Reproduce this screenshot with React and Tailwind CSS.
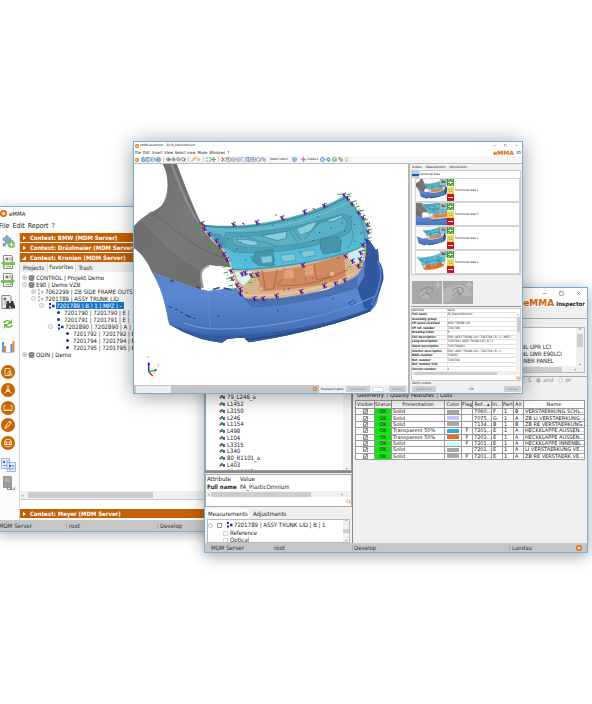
import React from "react";
import {
  Search, Save, FolderOpen, Printer, Eye, ZoomIn, ZoomOut, Move, Scissors,
  Copy, Box, Layers, Grid2x2, Maximize, Ruler, Pencil, MousePointer, Columns2, Square,
  Hexagon, Rotate3d, Crosshair, Lightbulb, PanelLeft, Database, Minus, X,
} from "lucide-react";

const SANS = "font-['DejaVu_Sans_Condensed','Noto_Sans',sans-serif]";

/* ---------- shared pieces ---------- */

function Logo({ className }) {
  return (
    <svg viewBox="0 0 14 14" className={className} aria-hidden="true">
      <circle cx="7" cy="7" r="7" fill="#d9690b" />
      <path d="M3.5 7.5a3.5 3.5 0 1 1 7 0c0 3-7 3-7 0zM4 7h6M7 4.500v6" fill="none" stroke="#fff" strokeWidth="1.300" />
    </svg>
  );
}

function WindowButtons({ className }) {
  return (
    <div className={"flex items-center text-[#333] " + className}>
      <button aria-label="Minimize"><Minus className="block size-full" strokeWidth={2} /></button>
      <button aria-label="Maximize"><Square className="block size-full" strokeWidth={2} /></button>
      <button aria-label="Close"><X className="block size-full" strokeWidth={2} /></button>
    </div>
  );
}

function Menu({ items, className }) {
  return (
    <nav className={"flex items-center " + className}>
      {items.map((m) => <button key={m} className="whitespace-nowrap">{m}</button>)}
    </nav>
  );
}

function Brand({ suffix, className }) {
  return (
    <div className={"flex items-center whitespace-nowrap " + className}>
      <span className="text-[#d9690b] font-bold font-['DejaVu_Sans',sans-serif]">eMMA</span>
      <span>{suffix}</span>
    </div>
  );
}

/* ---------- car model ---------- */

const MARKS = [
  [216, 188], [222, 202], [237, 220], [258, 240], [268, 255], [281, 280], [290, 296], [310, 190], [380, 184], [455, 171],
  [522, 153], [581, 134], [640, 103], [650, 112], [664, 128], [684, 155], [697, 170], [711, 192], [712, 212],
  [708, 238], [697, 252], [690, 275], [688, 295], [683, 315], [665, 300], [645, 285],
  [302, 330], [305, 352], [320, 372], [330, 385], [330, 398], [345, 335], [362, 342], [380, 340],
  [372, 412], [398, 412], [438, 404], [512, 391], [581, 374], [615, 367], [642, 357], [517, 312], [335, 338],
];
const GREEN = [
  [202, 193], [208, 215], [244, 252], [262, 270], [285, 318], [287, 335], [296, 352], [302, 374], [318, 392],
  [627, 101], [655, 101], [672, 122], [680, 138], [694, 150], [705, 178], [718, 206], [716, 232], [702, 268], [692, 305],
  [655, 318], [370, 350], [360, 365],
];

function Marker({ x, y }) {
  return (
    <g strokeWidth="3.500" fill="none">
      <path d={`M${x - 7} ${y - 5}l5 3M${x + 3} ${y + 6}l4 -5`} stroke="#e01818" />
      <path d={`M${x} ${y - 7}v14M${x - 4} ${y}h7`} stroke="#2222b8" />
      <path d={`M${x + 3} ${y - 6}l3 -2`} stroke="#2424e8" />
    </g>
  );
}

function Car({ viewBox, className, side = true, bumper = true, lid = true, marks = true, bright = false, label }) {
  return (
    <svg viewBox={viewBox} preserveAspectRatio="xMinYMin slice" className={className} role="img" aria-label={label}>
      <defs>
        <linearGradient id="gBlue" x1="0" y1="0" x2="0" y2="1">
          <stop offset="0" stopColor="#4f7cc4" /><stop offset=".55" stopColor="#5a87d0" />
          <stop offset=".85" stopColor="#4a75ba" /><stop offset="1" stopColor="#2c539a" />
        </linearGradient>
        <linearGradient id="gGrey" x1="0" y1="0" x2="1" y2="1">
          <stop offset="0" stopColor="#6c6c6c" /><stop offset=".5" stopColor="#7a7a7a" /><stop offset="1" stopColor="#707070" />
        </linearGradient>
        <linearGradient id="gCyan" x1="0" y1="0" x2="0" y2="1">
          <stop offset="0" stopColor="#58adbf" /><stop offset=".6" stopColor="#5cb4c8" /><stop offset="1" stopColor="#5abfda" />
        </linearGradient>
      </defs>
      {bumper && (
        <g>
          <path d="M66 333L128 356 200 381 235 388 318 378 345 408 450 408 590 385 680 335 704 290 706 232 716 238 735 266 741 262 744 300C752 310 759 330 757 355L743 400C741 425 733 438 720 447C640 482 500 520 355 542L342 529C320 528 296 530 288 534L275 543C220 538 170 520 117 488C103 420 96 385 66 333Z" fill="url(#gBlue)" />
          <path d="M706 232L716 238 735 266 741 262 744 300C752 310 759 330 757 355L743 400 722 442 700 440 680 380 700 345Z" fill="#31589e" />
          <path d="M740 300C752 320 753 350 738 392L722 430" fill="none" stroke="#5380c8" strokeWidth="5" />
          <path d="M318 385L345 412C450 420 600 395 682 345L678 378C600 410 460 435 362 438Z" fill="#4970b0" />
          <path d="M117 488C180 506 210 526 280 524 420 522 600 488 722 438L720 449C640 482 500 520 355 542L342 529C320 528 296 530 288 534L275 543C220 538 170 520 117 488Z" fill="#335a9c" />
          <path d="M160 484C200 498 230 504 280 502 420 500 610 462 730 405" fill="none" stroke="#6f98dc" strokeWidth="4" />
          <path d="M190 490C350 505 560 470 700 425" fill="none" stroke="#436db2" strokeWidth="2" strokeDasharray="4 4" />
          <path d="M345 534C480 520 610 492 720 446" fill="none" stroke="#244683" strokeWidth="3" />
          <path d="M232 390L240 500M232 390C280 392 310 386 322 400L362 438" fill="none" stroke="#6792d8" strokeWidth="2" />
          <path d="M116 435l10 4M135 443l8 2M150 451l8 3M165 459l18 8M188 469l7 3" stroke="#1d3f86" strokeWidth="3" />
          <path d="M655 424l14-8 6 8-14 8z" fill="none" stroke="#26498c" strokeWidth="2.500" />
          <path d="M262 461l4 4M440 446l4 4M605 410l4 4" stroke="#26498c" strokeWidth="3" />
        </g>
      )}
      {side && (
        <g>
          <path d="M98 9H140C162 66 186 130 212 184C232 222 256 250 277 266L290 286 303 318 235 312C215 320 210 345 216 378L200 382 128 356 66 333C52 300 38 280 12 260V195C40 158 80 150 98 130C120 100 118 50 98 9Z" fill="url(#gGrey)" />
          <path d="M124 9C150 80 180 150 205 182" fill="none" stroke="#8c8c8c" strokeWidth="7" />
          <path d="M134 9C160 76 184 140 208 184" fill="none" stroke="#626262" strokeWidth="2" />
          <path d="M60 152L75 160C110 125 118 90 112 40M75 160C140 210 220 280 292 292" fill="none" stroke="#626262" strokeWidth="2.500" />
          <path d="M12 195L35 178C90 240 160 300 210 325M35 178L60 152" fill="none" stroke="#8a8a8a" strokeWidth="2" />
          <path d="M35 178C90 240 160 300 208 325L205 380 128 356 66 333C52 300 38 280 12 260V195Z" fill="#666" opacity=".4" />
          <path d="M236 312L303 318 318 378 300 384 270 380 235 388 220 380C214 350 220 322 236 312Z" fill="#fff" />
          <path d="M236 312C212 322 206 330 218 380" fill="none" stroke="#999" strokeWidth="6" />
          <path d="M120 356l12 4M200 377l12 5M248 384l20 -6M280 380l24 4" stroke="#2a4c92" strokeWidth="5" />
        </g>
      )}
      {lid && (
        <g>
          <path d="M300 318C315 350 318 385 350 410C440 417 600 395 680 340C704 310 704 280 706 250L640 278 Z" fill={bright ? "#f07a28" : "#d9b48f"} />
          <path d="M375 335C480 328 580 300 640 278L645 345C580 378 450 385 395 390Z" fill={bright ? "#e2681c" : "#cf8a60"} />
          <path d="M395 325L405 385 430 380 440 325M440 370C500 378 580 362 650 325M460 320L465 350 440 365M490 318v45M520 315l5 45M550 310l8 45 60-14" fill="none" stroke="#aa6e4a" strokeWidth="3" />
          <path d="M460 325l30-4 2 30-34 2zM520 315l28-5 2 30-28 5z" fill="#e0a27c" stroke="#c38a66" strokeWidth="2" />
          <path d="M328 380C335 400 345 402 365 402 470 404 590 382 672 335" fill="none" stroke="#e6c6a4" strokeWidth="5" />
          <circle cx="392" cy="382" r="7" fill="#eab395" stroke="#a85b3b" /><circle cx="604" cy="337" r="8" fill="#eab395" stroke="#a85b3b" />
          <path d="M312 330H370L362 350 340 372 325 360Z" fill="#d8f5f3" />
          <path d="M645 280L700 255 696 300 665 310Z" fill="#cdeef0" />
          <path d="M212 190C350 206 520 172 640 105C662 122 690 160 708 190L712 235C705 255 680 266 640 278C560 302 420 328 305 326C300 300 292 285 280 266C256 250 230 222 212 190Z" fill={bright ? "#5cc8dc" : "url(#gCyan)"} />
          <path d="M280 266C400 285 590 255 712 215L712 235C705 255 680 266 640 278C560 302 420 328 305 326C300 300 292 285 280 266Z" fill="#4fbfe0" opacity=".55" />
          <path d="M212 192C350 212 520 180 642 112" fill="none" stroke="#3d899b" strokeWidth="4" />
          <path d="M225 201C350 222 530 190 650 124" fill="none" stroke="#7fcad8" strokeWidth="2" />
          <path d="M290 214C400 220 540 190 625 160C660 152 672 185 655 215C560 262 420 280 312 272C285 262 270 225 290 214Z" fill="#4da2b5" stroke="#3f8fa4" strokeWidth="2.500" />
          <path d="M308 226C400 230 540 195 630 168C652 170 650 190 640 208C560 245 430 265 330 256C310 248 300 238 308 226Z" fill="#5bb1c4" stroke="#428fa3" strokeWidth="2" />
          <path d="M316 235C350 230 380 240 392 248C370 258 330 250 316 235ZM390 224L470 210 466 232 440 238ZM497 203C515 195 550 180 560 182L540 210 510 222ZM585 178L635 160 636 168 605 182Z" fill="#8accda" stroke="#3f8b9f" strokeWidth="2.500" />
          <path d="M470 200L500 242M482 198L512 238M345 226L440 255M570 180L520 235" stroke="#4592a6" strokeWidth="3" />
          <path d="M376 272L425 265 432 300 425 314 385 312 364 296Z" fill="#4894a8" stroke="#3c8195" strokeWidth="2.500" />
          <path d="M568 235L618 225 632 238 628 270 578 278 570 262Z" fill="#4894a8" stroke="#3c8195" strokeWidth="2.500" />
          <path d="M450 282l42-5 4 20-40 5zM512 271l38-7 4 18-38 7zM390 286l35-3v20l-30 3z" fill="#86c9d6" stroke="#44a0b8" strokeWidth="2.500" />
          <path d="M305 324C420 326 560 300 640 276 680 264 705 252 711 238" fill="none" stroke="#3593af" strokeWidth="3" />
          <path d="M645 108C680 140 700 185 702 238M660 200C672 215 668 240 650 262" fill="none" stroke="#4598ac" strokeWidth="3" />
          <path d="M240 215L275 220 290 262 270 256Z" fill="#4580ac" opacity=".6" />
          <path d="M212 190C230 222 256 250 280 266C292 285 300 300 306 326L318 372 345 408" fill="none" stroke="#ddc69e" strokeWidth="3" />
          <path d="M290 232h3M332 225h3M330 242h3M380 246h3M425 192h3M495 178h3M560 165h3M600 200h3M632 185h3M640 210h3M660 165h3M670 190h3M690 215h3M505 272h3M360 287h3M345 297h3M318 262h3M565 214h3M545 238h3M672 240h3M430 310h3M620 290h3" stroke="#173f9a" strokeWidth="3" />
        </g>
      )}
      {marks && (
        <g>
          {MARKS.map(([x, y]) => <Marker key={x + "-" + y} x={x} y={y} />)}
          {GREEN.map(([x, y]) => <path key={x + "-" + y} d={`M${x - 7} ${y}l13 -3M${x + 4} ${y + 5}l2 2`} stroke="#22c022" strokeWidth="3" />)}
          <path d="M336 185l6 5M546 142l8 4M435 162h4" stroke="#e02020" strokeWidth="4" />
          <path d="M472 382h4M460 385h3M347 394h3M545 350h3" stroke="#b02890" strokeWidth="4" />
        </g>
      )}
      {marks && (
        <g strokeWidth="4" fill="none">
          <path d="M56 630V604" stroke="#1414e8" /><path d="M52 608l4-8 4 8z" fill="#1414e8" />
          <path d="M56 630l20-4" stroke="#18c818" /><path d="M74 622l8 3-7 4z" fill="#105010" />
          <path d="M56 630l12 13" stroke="#e81414" />
        </g>
      )}
    </svg>
  );
}

/* ---------- left window ---------- */

function SideIcon({ kind }) {
  const round = (d) => (
    <svg viewBox="0 0 14 14" className="size-3.5"><circle cx="7" cy="7" r="7" fill="#c86300" /><path d={d} fill="none" stroke="#fbe3cf" strokeWidth=".9" /></svg>
  );
  switch (kind) {
    case "plugin":
      return <svg viewBox="0 0 14 14" className="size-3.5"><path d="M2 4h2.500a1.700 1.700 0 1 1 3 0H10v2.500a1.700 1.700 0 1 1 0 3V12H7a1.500 1.500 0 1 0-2.500 0H2V9.500a1.600 1.600 0 1 0 0-3z" fill="#8aa3c0" stroke="#6b86a8" strokeWidth=".5" /><circle cx="10.500" cy="10.500" r="3.500" fill="#7fc25a" /><path d="M10.500 8.500v4M8.500 10.500h4" stroke="#fff" strokeWidth="1.200" /></svg>;
    case "import":
    case "export":
      return <svg viewBox="0 0 14 14" className="size-3.5"><path d="M2.500.5h8l1 1v12h-9z" fill="#f4f4f4" stroke="#8a8a8a" /><path d="M5 3h2v2H5zM8 3h3M8 5h3M5 11.500h5" stroke="#777" fill="#777" strokeWidth=".7" /><path d={kind === "import" ? "M0 8l4-3v2h10v3H4v2z" : "M14 8l-4-3v2H0v3h10v2z"} fill="#7cc254" /></svg>;
    case "find":
      return <svg viewBox="0 0 14 14" className="size-3.5"><path d="M1 .5h8l1 1v12H1z" fill="#eee" stroke="#888" /><path d="M3 3h2v2H3zM3 7h3M3 9h2" stroke="#777" fill="#777" strokeWidth=".7" /><path d="M6 6h2v2h2V6h2l2 5v2.500h-4V11H8.500v2.500H5V11z" fill="#3c3c3c" /></svg>;
    case "sync":
      return <svg viewBox="0 0 14 14" className="size-3.5"><path d="M2 6c1-3 5-4 7-2l2-2v5H6l2-2C6 4 4 5 4 6zM12 8c-1 3-5 4-7 2l-2 2V7h5L6 9c2 1 4 0 4-1z" fill="#79bd50" /></svg>;
    case "chart":
      return <svg viewBox="0 0 14 14" className="size-3.5"><path d="M2 3v10M10.500 5v8" stroke="#5489c4" strokeWidth="1.800" /><path d="M4 7v6M12.500 2v11" stroke="#e67b37" strokeWidth="1.800" /><path d="M1 13.500h12" stroke="#999" strokeWidth=".6" /></svg>;
    case "zoomdoc": return round("M4 3.500h5v7H4zM8.500 6.500a1.800 1.800 0 1 0 .1 0M10 9.500l1.500 1.500");
    case "axes": return round("M7 2.500v5M7 7.500l-4 3M7 7.500l4 3M5.500 6.500h3v2h-3zM6 3.500l1-1 1 1");
    case "gauge": return round("M4.500 4.500H3v5h8v-5H9.500M5 9.500V8M7 9.500V8M9 9.500V8");
    case "pen": return round("M4 10.500l.5-2.500L8.500 3l2 1.500-4 5zM8 4l2 1.500M4 10.500l3-4");
    case "stack": return round("M4 4.500c0-1.500 6-1.500 6 0v5c0 1.500-6 1.500-6 0zM3 6h8M3 8.500h8M5.500 6v2.500M8.500 6v2.500");
    case "docs":
      return <svg viewBox="0 0 15 14" className="h-3.5 w-[15px]"><path d="M.5.5h8v10h-8zM6 4.500h8.500v9H6z" fill="#e4edfa" stroke="#9cb6e0" /><path d="M2 3h2v2H2zM8 7h2v2H8z" fill="#3c62a8" /><path d="M5.500 3h2M2 7.500h4M11 7.500h2M11 9h2M8 11h5" stroke="#7b98cc" /></svg>;
    default:
      return <svg viewBox="0 0 14 14" className="size-3.5"><path d="M2 0h8l1 1v11H2z" fill="#9a9a9a" /><path d="M4 3h4M4 5h5" stroke="#c8c8c8" /><path d="M7 11.500a2 1.500 0 1 0 3 0 2 1.500 0 1 0 3 0" fill="none" stroke="#888" strokeWidth="1.200" /></svg>;
  }
}

function Node({ kind }) {
  if (kind === "db") return <Database className="mr-px h-1.5 w-[7px] shrink-0 text-[#777]" strokeWidth={4} fill="#999" />;
  if (kind === "gray" || kind === "blue")
    return <svg viewBox="0 0 7 6" className={"mr-px h-1.5 w-[7px] shrink-0 " + (kind === "blue" ? "text-[#15309c]" : "text-[#bbb]")}><path d="M1 0h2v2H1zM1 3.500h2v2H1zM4 1.800h2.500v2.500H4z" fill="currentColor" /></svg>;
  return <span className="mr-1 size-[3px] shrink-0 rounded-full bg-[#15309c]" />;
}

function Plus({ open }) {
  return <span className="mr-px flex size-[5px] shrink-0 items-center justify-center rounded-xs border border-[#ccc] bg-[#f4f4f4] text-[4px] leading-none text-[#888]">{open ? "-" : "+"}</span>;
}

const TREE = [
  ["pl-[2px]", "+", "db", "CONTROL | Projekt Demo"],
  ["pl-[2px]", "-", "db", "E90 | Demo VZB"],
  ["pl-[11px]", "+", "gray", "7062299 | ZB SIDE FRAME OUTS"],
  ["pl-[11px]", "-", "gray", "7201789 | ASSY TRUNK LID"],
  ["pl-[19px]", "-", "blue", "7201789 | B | 1 | MPZ | -"],
  ["pl-[37px]", "", "dot", "7201790 | 7201790 | E |"],
  ["pl-[37px]", "", "dot", "7201791 | 7201791 | E |"],
  ["pl-[28px]", "-", "blue", "7202890 | 7202890 | A |"],
  ["pl-[46px]", "", "dot", "7201792 | 7201792 | E"],
  ["pl-[46px]", "", "dot", "7201794 | 7201794 | E"],
  ["pl-[46px]", "", "dot", "7201795 | 7201795 | E"],
  ["pl-[2px]", "+", "db", "ODIN | Demo"],
];

function ContextBar({ name, open }) {
  return (
    <button className="flex h-[9px] shrink-0 items-center gap-1 bg-[#c66006] pl-[2px] text-left text-[6px] leading-none font-bold text-white">
      <svg viewBox="0 0 4 4" className="size-1"><path d={open ? "M4 0v4H0z" : "M1 0l3 2-3 2z"} fill="#fff" /></svg>
      <span>{"Context: " + name + " (MDM Server)"}</span>
    </button>
  );
}

function MainWindow() {
  const side = [
    ["plugin", "mt-[1px]"], ["import", "mt-[7px]"], ["export", "mt-[4px]"], ["find", "mt-2"], ["sync", "mt-2"], ["chart", "mt-2"],
    ["zoomdoc", "mt-3"], ["axes", "mt-[4px]"], ["gauge", "mt-[4px]"], ["pen", "mt-[3px]"], ["stack", "mt-[4px]"],
    ["docs", "mt-2"], ["list", "mt-[4px]"],
  ];
  return (
    <section className="absolute top-[206px] left-[-2px] flex h-[326px] w-[281px] flex-col border border-[#7fb4d8] bg-white shadow-[0_3px_12px_rgba(0,0,0,0.3)]">
      <header className="flex h-[13px] items-center gap-[2px] pl-px text-[6px] leading-none"><Logo className="size-[7px]" />eMMA</header>
      <Menu items={["File", "Edit", "Report", "?"]} className="h-[13px] gap-[3px] text-[7px] leading-none" />
      <div className="flex min-h-0 flex-1">
        <aside className="flex w-5 flex-col items-start bg-[#fcfcfc]">
          {side.map(([k, m]) => <button key={k} aria-label={k} className={"ml-[2px] " + m}><SideIcon kind={k} /></button>)}
        </aside>
        <div className="flex min-w-0 flex-1 flex-col border-l border-[#d5d5d5]">
          <div className="flex flex-col gap-px">
            <ContextBar name="BMW" /><ContextBar name="Dräxlmaier" /><ContextBar name="Kronion" open />
          </div>
          <div className="flex h-[10px] items-stretch bg-[#f0f0f0] text-[6px] leading-none">
            <button className="px-[3px] pt-[2px]">Projects</button>
            <button className="border-x border-[#ddd] bg-white px-px">Favorites</button>
            <button className="px-[3px] pt-[2px]">Trash</button>
          </div>
          <ul className="flex-1 pt-[2px] text-[6px] leading-none">
            {TREE.map(([pad, exp, kind, text], i) => (
              <li key={i} className={"flex h-[7px] items-center whitespace-pre " + pad}>
                {exp && <Plus open={exp === "-"} />}
                {kind === "blue" && <span className="w-[3px]" />}
                <Node kind={kind} />
                <span className={i === 4 ? "flex h-[7px] w-[68px] items-center bg-[#1878d0] text-white" : ""}>{text}</span>
              </li>
            ))}
          </ul>
          <div className="flex h-[9px] items-center gap-1 border-b border-[#ccc] bg-[#f0f0f0] pl-[2px] text-[5px] leading-none"><span>‹</span><span className="h-1.5 w-[125px] bg-[#cdcdcd]" /></div>
          <div className="mb-[2px] flex flex-col pt-[9px]"><ContextBar name="Meyer" /></div>
        </div>
      </div>
      <footer className="flex h-[11px] items-center bg-[#c6c6c6] text-[6px] leading-none text-[#333]">
        <span className="w-[67px]">MDM Server</span><span className="w-[91px] border-l border-[#aaa] pl-[2px]">root</span><span className="border-l border-[#aaa] pl-[2px]">Develop</span>
      </footer>
    </section>
  );
}

/* ---------- inspector window ---------- */

const LABELS = ["79_L246_a", "L1452", "L3150", "L246", "L1154", "L498", "L104", "L3315", "L340", "80_R1101_a", "L403", "79_R0713_a"];

const PARTS = [
  ["Solid", "bg-[#a8a8a8]", "", "7060...", "F", "1", "B", "VERSTAERKUNG SCHL..."],
  ["Solid", "bg-[#c8c4ff]", "", "7075...", "G", "1", "A", "ZB LI VERSTAERKUNG ..."],
  ["Solid", "bg-[#a8a8a8]", "", "7134...", "B", "1", "B", "ZB RE VERSTAERKUNG..."],
  ["Transparent 50%", "bg-[#28b0e0]", "F", "7201...", "E", "1", "A", "HECKKLAPPE AUSSEN..."],
  ["Transparent 50%", "bg-[#f06a18]", "F", "7201...", "E", "1", "A", "HECKKLAPPE AUSSEN..."],
  ["Solid", "bg-[#c8fcff]", "F", "7201...", "E", "1", "A", "HECKKLAPPE INNENBL..."],
  ["Solid", "bg-[#a8a8a8]", "", "7201...", "E", "1", "A", "LI VERSTAERKUNG VE..."],
  ["Solid", "bg-[#a8a8a8]", "F", "7201...", "E", "1", "A", "ZB RE VERSTAERK.VE..."],
];

function Check({ label, checked, muted }) {
  return (
    <span className="relative mx-auto flex size-[5px] items-center justify-center">
      <input type="checkbox" defaultChecked={checked} aria-label={label} className={"size-[5px] appearance-none border bg-white " + (muted ? "border-[#d4d4d4]" : "border-[#999]")} />
      {checked && <svg viewBox="0 0 5 5" className="pointer-events-none absolute inset-0"><path d="M1 2.500l1 1.200 2-2.700" stroke="#222" strokeWidth=".7" fill="none" /></svg>}
    </span>
  );
}

function Inspector() {
  const td = "border border-[#9a9a9a] p-0 pl-px";
  return (
    <section className="absolute top-[287px] left-[204px] flex h-[266px] w-[384px] flex-col border border-[#6fb0dc] bg-[#f0f0f0] shadow-[0_3px_14px_rgba(0,0,0,0.35)]">
      <header className="flex h-[11px] items-center justify-end bg-white">
        <WindowButtons className="mr-[6px] gap-3 [&>button]:size-[5px]" />
      </header>
      <Brand suffix="Inspector" className="h-[8px] items-baseline justify-end gap-[2px] bg-white pr-[2px] font-bold [&>span:first-child]:text-[9px] [&>span:first-child]:leading-[9px] [&>span:last-child]:text-[6px]" />
      <div className="h-[12px] border-b border-[#aaa]" />
      <div className="flex min-h-0 flex-1">
        <div className="flex w-[148px] shrink-0 flex-col border-r border-[#888]">
          <div className="flex h-[154px] overflow-hidden border border-[#999] bg-white">
            <ul className="mt-[74px] grid h-[81px] flex-1 auto-rows-fr pl-[13px] text-[6px] leading-none">
              {LABELS.map((l) => (
                <li key={l} className="flex items-center gap-[2px]">
                  <svg viewBox="0 0 6 4" className="h-1 w-1.5"><path d="M0 2.500L2 .5V4z" fill="#e04030" /><path d="M2 0h2v3H2z" fill="#38a048" /><path d="M4 1h2v3H4z" fill="#4060e0" /></svg>{l}
                </li>
              ))}
            </ul>
            <span className="flex w-2 items-end justify-center bg-[#f4f4f4] text-[5px] leading-none">⌄</span>
          </div>
          <div className="h-[3px] border-t-2 border-[#888]" />
          <div className="h-[33px] border border-[#aaa] bg-white text-[6px] leading-none">
            <table className="w-full table-fixed text-left">
              <thead><tr className="h-2"><th className="w-[34px] p-0 pl-px font-normal">Attribute</th><th className="p-0 font-normal">Value</th></tr></thead>
              <tbody><tr className="h-2"><td className="p-0 pl-px font-bold">Full name</td><td className="p-0">FA_PlasticOmnium</td></tr></tbody>
            </table>
            <div className="flex h-1.5 items-center gap-px bg-[#f0f0f0] px-[2px] text-[5px]"><span>‹</span><span className="h-[5px] w-[100px] bg-[#cdcdcd]" /><span className="ml-auto pr-1.5">›</span></div>
            <label className="flex h-[9px] items-center justify-end"><input aria-label="Filter attributes" className="h-2 min-w-0 flex-1" /><Search className="size-[5px] text-[#e08030]" strokeWidth={3} /></label>
          </div>
          <div className="mt-[2px] flex h-[10px] items-center gap-1 pl-[2px] text-[6px] leading-none">
            <button className="h-full bg-white px-px">Measurements</button><button>Adjustments</button>
          </div>
          <div className="mx-[2px] flex h-[24px] overflow-hidden border border-[#bbb] bg-white text-[6px] leading-none">
            <ul className="flex-1 pt-px">
              <li className="flex h-2 items-center"><Plus open /><span className="mx-[3px]"><Check label="Trunk lid" /></span><span className="ml-px"><Node kind="blue" /></span>7201789 | ASSY TRUNK LID | B | 1</li>
              <li className="flex h-2 items-center pl-[15px]"><label className="flex items-center gap-[2px]"><Check muted label="Reference" />Reference</label></li>
              <li className="flex h-1.5 items-center pl-[15px]"><label className="flex items-center gap-[2px]"><Check muted label="Optical" />Optical</label></li>
            </ul>
            <span className="flex w-1.5 flex-col items-center justify-between bg-[#f0f0f0] text-[4px]"><span>⌃</span><span className="h-1 w-1.5 bg-[#cdcdcd]" /><span>⌄</span></span>
          </div>
        </div>
        <div className="flex min-w-0 flex-1 flex-col">
          <div className="mx-[2px] mt-2 flex h-[46px] border border-[#bbb] bg-white">
            <div className="flex min-w-0 flex-1 flex-col">
              <ul className="flex-1 overflow-hidden pt-[15px] pl-[162px] text-[6px] leading-[7px] whitespace-nowrap">
                <li>PNL UPR LCI</li><li>PNL LWR E90LCI</li><li>INNER PANEL</li>
              </ul>
              <div className="flex h-[6px] items-center justify-end bg-[#f0f0f0] text-[5px] leading-none"><span className="mr-3 h-[5px] w-[150px] bg-[#cdcdcd]" /><span>›</span></div>
            </div>
            <div className="flex w-2 flex-col items-center bg-[#f0f0f0] text-[5px] leading-none"><span>⌃</span><span className="mt-px h-[13px] w-1.5 bg-[#cdcdcd]" /><span className="mt-auto mb-1.5">⌄</span></div>
          </div>
          <fieldset className="mt-[3px] flex h-[18px] items-center justify-end gap-[5px] border-t border-[#aaa] pr-4 text-[6px] leading-none text-[#888]">
            <label className="flex items-center gap-[3px]"><Check muted label="S" />S</label>
            <label className="flex items-center gap-[2px]"><input type="radio" name="op" defaultChecked className="size-[5px] appearance-none rounded-full border border-[#bbb] bg-white checked:bg-[#bbb]" />and</label>
            <label className="flex items-center gap-[2px]"><input type="radio" name="op" className="size-[5px] appearance-none rounded-full border border-[#ccc] bg-white" />or</label>
          </fieldset>
          <div className="flex h-[6px] items-end gap-[3px] pb-[2px] pl-1 text-[6px] leading-none"><button>Geometry</button><button className="border-l border-[#bbb] pl-[2px]">Quality Features</button><button className="border-l border-[#bbb] pl-[2px]">Cuts</button></div>
          <div className="mx-[2px]">
            <table className="h-[60px] w-full table-fixed border-collapse bg-white text-left font-['DejaVu_Sans',sans-serif] text-[5px] leading-[5px] whitespace-nowrap">
              <colgroup><col className="w-[19px]" /><col className="w-[17px]" /><col className="w-[53px]" /><col className="w-[17px]" /><col className="w-[11px]" /><col className="w-[19px]" /><col className="w-[11px]" /><col className="w-[11px]" /><col className="w-[10px]" /><col /></colgroup>
              <thead><tr className="h-2 text-center">{["Visible", "Status", "Presentation", "Color", "Flag", "Ref...▴", "In...", "Part", "Alt", "Name"].map((h) => <th key={h} className="border border-[#9a9a9a] p-0 font-normal">{h}</th>)}</tr></thead>
              <tbody>
                {PARTS.map(([pres, color, flag, ref, ix, part, alt, name], i) => (
                  <tr key={i}>
                    <td className="border border-[#9a9a9a] p-0"><Check checked label={"Show " + name} /></td>
                    <td className="border border-[#9a9a9a] bg-[#00f000] p-0 text-center">OK</td>
                    <td className={td}>{pres}</td>
                    <td className="border border-[#9a9a9a] p-0"><span className={"mx-auto block h-1 w-3 " + color} /></td>
                    <td className="border border-[#9a9a9a] p-0 text-center">{flag}</td>
                    <td className={td}>{ref}</td><td className={td}>{ix}</td><td className={td}>{part}</td><td className={td}>{alt}</td>
                    <td className={td}>{name}</td>
                  </tr>
                ))}
              </tbody>
            </table>
          </div>
        </div>
      </div>
      <footer className="flex h-[9px] items-center bg-[#c6c6c6] text-[6px] leading-none text-[#333]">
        <span className="w-[67px] pl-[6px]">MDM Server</span><span className="w-[80px] pl-[2px]">root</span><span className="flex-1 border-l border-[#aaa] pl-px">Develop</span><span className="w-[67px] border-l border-[#aaa] pl-[2px]">Landau</span><Logo className="mr-[5px] size-[6px]" />
      </footer>
    </section>
  );
}

/* ---------- 3D assembler window ---------- */

const TOOLS = [
  [Save, "text-[#4a7fc0]"], [PanelLeft, "text-[#4a7fc0]"], [FolderOpen, "text-[#4a90c0]"], [Printer, "text-[#667]"], null,
  [Eye, "text-[#445]"], [ZoomIn, "text-[#3a9a3a]"], [ZoomOut, "text-[#3a9a3a]"], [Search, "text-[#444]"], null,
  [Pencil, "text-[#e08a30]"], [MousePointer, "text-[#e0a070]"], null, [Maximize, "text-[#3aa03a]"], [Move, "text-[#3aa03a]"], null,
  [Scissors, "text-[#a06a40]"], [Copy, "text-[#8a7050]"], [Layers, "text-[#7a90b0]"], [Box, "text-[#7a90b0]"], [Square, "text-[#a0a8b8]"],
  [Columns2, "text-[#4a70b0]"], [Grid2x2, "text-[#7a90b0]"], [Hexagon, "text-[#4a70b0]"], [Ruler, "text-[#4a70b0]"],
];
const TOOLS2 = [[Crosshair, "text-[#2a8ad0]"], [Rotate3d, "text-[#4a60d0]"], [Layers, "text-[#30a040]"], [Ruler, "text-[#555]"], [Lightbulb, "text-[#e0a020]"]];

const SCENES = [
  { name: "Functional Area 1", tag: "R2", box: "12 80 740 525", props: {} },
  { name: "Functional Area 3", tag: "R2", box: "130 180 440 312", props: {} },
  { name: "Functional Area 2", tag: "F1", box: "60 120 720 511", props: { side: false } },
  { name: "Functional Area 4", tag: "R0", box: "200 80 540 383", props: { side: false, bumper: false, bright: true } },
];

const ATTRS = [
  ["Full name", "FA_PlasticOmnium"], ["Assembly group", "-"], ["CP name localized", "ASSY TRUNK LID"], ["CP ref. number", "7201789"],
  ["Drawing index", "B"], ["Full description", "E90 / ASSY TRUNK LID / 7201789 / B / 1 / MPZ / -"], ["Long description", "7201789 | ASSY TRUNK LID | B | 1"],
  ["Short description", "7201789|B|1"], ["Shorter description", "E90 / ASSY TRUNK LID / 7201789 / B / 1"], ["NAEL number", "5360SV"],
  ["Ref. number", "7201789"], ["Ref. number hint", ""], ["Version number", "1"],
];

function Scene({ name, tag, box, props }) {
  return (
    <li className="ml-[3px] flex h-6 items-stretch border border-[#d5d5d5] bg-white">
      <div className="relative w-[31px]">
        <Car viewBox={box} className="h-[22px] w-[31px]" marks={false} label={name} {...props} />
        <span className="absolute top-0 right-0 flex h-[6px] w-[7px] items-center justify-center bg-[#a8b8c4] text-[3px] leading-none font-bold">{tag}</span>
      </div>
      <div className="flex w-[7px] flex-col justify-between">
        <button aria-label={"Add to " + name} className="h-[7px] bg-[#3c9c28]"><svg viewBox="0 0 7 7" className="size-full"><path d="M1 1h1.500M4.500 1H6M1 3.500h1M5 3.500h1M1 6h1.500M4.500 6H6M3.500 2v3M2 3.500h3" stroke="#e8f8e0" /></svg></button>
        <button aria-label={"Edit " + name} className="h-[7px] bg-[#e8dc50]"><svg viewBox="0 0 7 7" className="size-full"><path d="M1 2.500h5M1 4.500h5" stroke="#c8bc60" /></svg></button>
        <button aria-label={"Remove from " + name} className="h-[7px] bg-[#cc1020]"><svg viewBox="0 0 7 7" className="size-full"><path d="M1 3.500h5" stroke="#fff" /></svg></button>
      </div>
      <span className="self-center pl-px">{name}</span>
    </li>
  );
}

function GhostThumb({ rot }) {
  return (
    <button aria-label="Scene action" className="h-[23px] w-[30px] bg-[#a8a8a8]">
      <svg viewBox="0 0 30 23" className="size-full"><path d={rot ? "M0 9L8 5 17 3 26 8 30 14 22 16 14 14 6 20 0 23z" : "M7 13l6-5 7 3-3 6-6 1z"} fill="#b6b6b6" /><path d="M9 10c3-4 9-5 11-2s-2 6-6 5M10 15l5-5 4 6M14 7l2 6" fill="none" stroke="#8c8c8c" /><path d="M25 1h2v2h2v2h-2v2h-2V5h-2V3h2z" fill="#bebebe" /></svg>
    </button>
  );
}

function Pager({ children, className }) {
  return <button className={"h-[6px] bg-[#cfcfcf] text-[3px] leading-none text-[#888] " + className}>{children}</button>;
}

function Assembler() {
  return (
    <section className="absolute top-[141px] left-[133px] flex h-[253px] w-[390px] flex-col border border-[#6fb0d0] bg-white text-[3px] leading-none shadow-[0_2px_20px_rgba(0,0,0,0.4)]">
      <header className="flex h-[7px] items-center gap-px pl-px"><Logo className="size-1" /><h1>eMMA Assembler - 3D FA_PlasticOmnium</h1><WindowButtons className="mr-1 ml-auto gap-2 [&>button]:size-[3px]" /></header>
      <div className="flex h-[7px] items-center justify-between pr-px">
        <Menu items={["File", "Edit", "Insert", "View", "Select view", "Mode", "Windows", "?"]} className="gap-[2px] pl-px text-[4px]" />
        <Brand suffix="3D" className="gap-[2px] [&>span:first-child]:text-[6px] [&>span:last-child]:text-[4px]" />
      </div>
      <div className="flex h-2 items-center border-b border-[#bbb] bg-[#f6f6f6] pl-px">
        <Logo className="mr-[2px] size-1" />
        {TOOLS.map((t, i) => {
          if (!t) return <span key={i} className="mx-[2px] h-[5px] w-px bg-[#ccc]" />;
          const [Icon, c] = t;
          return <button key={i} aria-label={"Tool " + i}><Icon className={"size-[5px] " + c} strokeWidth={3} /></button>;
        })}
        <button className="ml-1 whitespace-nowrap">Select view ▾</button>
        <Box className="mx-1 size-[5px] text-[#3a70c0]" strokeWidth={3} /><Move className="size-[5px] text-[#c040c0]" strokeWidth={3} />
        <button className="mx-[2px] whitespace-nowrap">Cubes ▾</button>
        <div className="flex gap-px">{TOOLS2.map(([Icon, c], i) => <button key={i} aria-label={"Mode " + i}><Icon className={"size-[5px] " + c} strokeWidth={3} /></button>)}</div>
      </div>
      <div className="flex min-h-0 flex-1">
        <div className="flex min-w-0 flex-1 flex-col">
          <div className="relative min-h-0 flex-1">
            <Car viewBox="12 9 819 663" className="size-full" label="Car rear assembly" />
            <div className="absolute bottom-2.5 left-[13px] grid w-3 grid-cols-2 gap-y-[5px] text-[#333]"><span>z</span><span /><span /><span className="text-right">y</span><span /><span className="text-[#a00]">x</span></div>
          </div>
          <div className="flex h-2 items-center bg-[#c4c4c4]">
            <span className="ml-[2px] h-[7px] w-[35px] bg-[#efefef]" />
            <div className="ml-auto flex h-full items-center bg-[#f0f0f0]">
              <span className="flex h-full items-center bg-[#c4c4c4] pr-[2px]"><Logo className="size-1" /></span>
              <label htmlFor="labels" className="pr-[2px] pl-[2px]">Displayed Labels</label>
              <Pager className="w-6">◂◂ previous</Pager>
              <input id="labels" className="mx-[2px] h-[5px] w-3 border border-[#ddd] bg-white" /><span className="mx-px">–</span>
              <Pager className="mr-[2px] w-[17px]">▸▸ next</Pager>
            </div>
          </div>
        </div>
        <div className="flex w-[114px] shrink-0 flex-col border-l-2 border-[#b5b5b5] bg-[#f0f0f0] pr-px pl-px">
          <div className="flex h-[8px] items-center gap-[4px] pl-px"><button>Scenes</button><button>Measurements</button><button>Adjustments</button></div>
          <div className="border border-[#ccc] bg-white">
            <div className="flex h-[7px] items-center"><span className="flex h-full w-[7px] items-center bg-[#b8ccdc]"><span className="h-[2px] w-full bg-[#1060b0]" /></span>Functional Area</div>
            <ul>{SCENES.map((s) => <Scene key={s.name} {...s} />)}</ul>
          </div>
          <div className="mt-[6px] flex gap-px pl-px"><GhostThumb /><GhostThumb rot /></div>
          <div className="mt-[2px] h-px border-t border-[#999]" />
          <div className="mt-px border border-[#ccc] bg-white">
            <div className="flex">
              <table className="h-[62px] flex-1 table-fixed border-collapse text-left whitespace-nowrap">
                <thead><tr><th className="w-[35px] p-0 font-normal">Attribute</th><th className="p-0 font-normal">Value</th></tr></thead>
                <tbody>{ATTRS.map(([k, v]) => <tr key={k} className="border-t border-[#e2e2e2]"><th className="p-0 font-bold">{k}</th><td className="border-l border-[#e2e2e2] p-0">{v}</td></tr>)}</tbody>
              </table>
              <span className="mt-[5px] flex w-[4px] flex-col items-center bg-[#f0f0f0]"><span>⌃</span><span className="h-[15px] w-[3px] bg-[#cdcdcd]" /></span>
            </div>
            <div className="flex h-1 items-center gap-px bg-[#f0f0f0]"><span>‹</span><span className="h-[3px] w-[83px] bg-[#cdcdcd]" /><span className="ml-auto pr-[5px]">›</span></div>
            <label className="flex h-[5px] items-center"><input aria-label="Filter" className="h-[5px] min-w-0 flex-1" /><Search className="size-[4px] text-[#e08030]" strokeWidth={4} /></label>
          </div>
          <p className="mt-auto py-px pl-px">Switch scenes</p>
          <div className="mb-px flex items-center justify-between pl-px"><Pager className="w-6">◂◂ previous</Pager><span>.../50</span><Pager className="w-[17px]">next ▸▸</Pager></div>
        </div>
      </div>
    </section>
  );
}

export default function App() {
  return (
    <main className={"relative min-h-screen overflow-hidden bg-white text-[#222] " + SANS}>
      <MainWindow />
      <Inspector />
      <Assembler />
    </main>
  );
}
